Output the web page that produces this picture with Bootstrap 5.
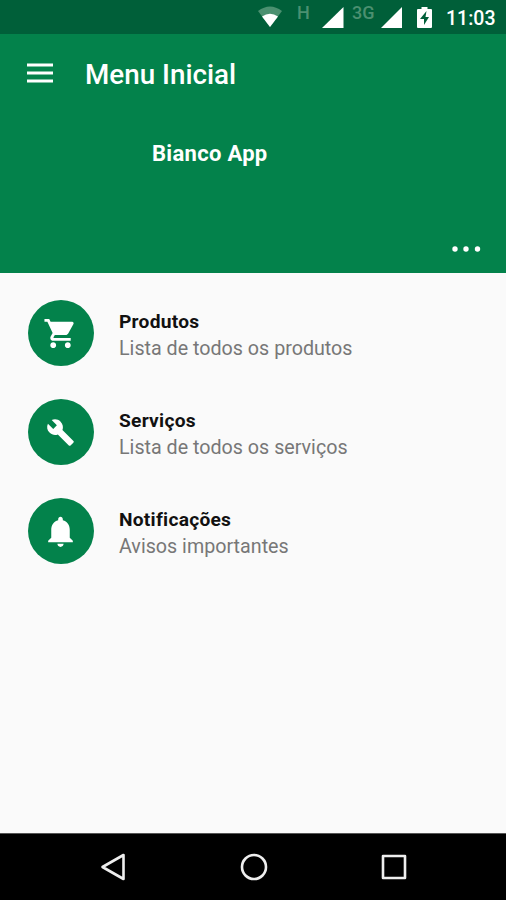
<!DOCTYPE html>
<html lang="pt-BR">
<head>
<meta charset="utf-8">
<meta name="viewport" content="width=device-width, initial-scale=1">
<title>Menu Inicial</title>
<link href="https://cdn.jsdelivr.net/npm/bootstrap@5.3.0/dist/css/bootstrap.min.css" rel="stylesheet">
<style>
body{font-family:Roboto,"Noto Sans",sans-serif;background:#fafafa;height:900px;overflow:hidden}
svg{display:block;flex:none}
.status{height:34px;background:#005f39}
.status .clock{font-size:19.5px;font-weight:500;line-height:34px;width:50px;margin-left:14px;margin-right:10px;white-space:nowrap;padding-top:2px}
.net{font-size:18px;font-weight:500;line-height:26px;color:#4b9070;height:34px}
.net-h{margin-left:14px;width:25px}
.net-3g{margin-left:8px;width:29px}
.battery{margin-left:14px}
.hero{height:239px;background:#03824b}
.hero-bar{padding:23px 27px 0}
.hero-bar svg{margin-bottom:3px}
.app-title{font-size:27.8px;font-weight:500;line-height:34px;padding-left:32px;padding-top:1px}
.app-name{font-size:22px;letter-spacing:.3px;font-weight:700;line-height:28px;padding-left:152px;margin-top:48px}
.more{padding:0 25px 20px}
.menu-list{padding:27px 28px 0;gap:33px}
.disc{width:66px;height:66px;background:#03824b;flex:none}
.disc svg{margin-right:1px}
.entry{gap:25px}
.entry-copy{padding-top:4px}
.entry-title{font-size:19.2px;letter-spacing:.25px;font-weight:700;line-height:27px;color:#111}
.entry-text{font-size:19.7px;font-weight:400;line-height:27px;color:#777}
.softkeys{height:67px;background:#000;border-top:1px solid #555;padding:0 98px 0 99px}
</style>
</head>
<body class="d-flex flex-column">
<div class="status d-flex justify-content-end align-items-start text-white">
  <svg width="26" height="34" viewBox="0 0 26 34"><path d="M1 11Q13 2 25 11L13 27z" fill="#4b9070"/><path d="M5 16.500Q13 11 21 16.500L13 27z" fill="#fff"/></svg>
  <span class="net net-h">H</span>
  <svg width="22" height="34" viewBox="0 0 22 34"><path d="M0 28L21.5 7V28z" fill="#fff"/></svg>
  <span class="net net-3g">3G</span>
  <svg width="22" height="34" viewBox="0 0 22 34"><path d="M0 28L21 7V28z" fill="#fff"/></svg>
  <svg class="battery" width="15" height="34" viewBox="0 0 15 34"><path d="M4.5 7h6v2H14q1 0 1 1v17q0 1-1 1H1q-1 0-1-1V10q0-1 1-1h3.500z" fill="#fff"/><path d="M9.500 11L3 19h4v6l5-8H8.500z" fill="#005f39"/></svg>
  <span class="clock">11:03</span>
</div>
<header class="hero text-white d-flex flex-column">
  <div class="hero-bar d-flex align-items-center">
    <svg width="26" height="20" viewBox="0 0 26 20"><path d="M0 2h26M0 10h26M0 18h26" stroke="#fff" stroke-width="3.2"/></svg>
    <div class="app-title">Menu Inicial</div>
  </div>
  <div class="app-name">Bianco App</div>
  <div class="more mt-auto ms-auto">
    <svg width="30" height="8" viewBox="0 0 30 8" fill="#fff"><circle cx="4" cy="4" r="2.700"/><circle cx="15" cy="4" r="2.700"/><circle cx="26.500" cy="4" r="2.700"/></svg>
  </div>
</header>
<main class="menu-list d-flex flex-column flex-grow-1">
  <div class="entry d-flex align-items-center">
    <div class="disc rounded-circle d-flex align-items-center justify-content-center"><svg width="35" height="35" viewBox="0 0 24 24" fill="#fff"><path d="M7 18c-1.100 0-1.990.9-1.990 2S5.900 22 7 22s2-.9 2-2-.9-2-2-2zM1 2v2h2l3.600 7.590-1.350 2.450c-.16.280-.25.610-.25.960 0 1.100.9 2 2 2h12v-2H7.420c-.14 0-.25-.11-.25-.25l.03-.12.900-1.630h7.450c.75 0 1.410-.41 1.750-1.030l3.580-6.490A1 1 0 0 0 20 4H5.210l-.94-2H1zm16 16c-1.100 0-1.990.9-1.990 2s.89 2 1.990 2 2-.9 2-2-.9-2-2-2z"/></svg></div>
    <div class="entry-copy"><div class="entry-title">Produtos</div><div class="entry-text">Lista de todos os produtos</div></div>
  </div>
  <div class="entry d-flex align-items-center">
    <div class="disc rounded-circle d-flex align-items-center justify-content-center"><svg width="29" height="29" viewBox="0 0 24 24" fill="#fff"><path d="M22.700 19l-9.100-9.100c.9-2.300.4-5-1.500-6.900-2-2-5-2.400-7.400-1.300L9 6 6 9 1.600 4.700C.4 7.100.9 10.100 2.900 12.100c1.900 1.900 4.600 2.400 6.900 1.500l9.100 9.100c.4.4 1 .4 1.400 0l2.300-2.300c.5-.4.5-1.100.1-1.400z"/></svg></div>
    <div class="entry-copy"><div class="entry-title">Serviços</div><div class="entry-text">Lista de todos os serviços</div></div>
  </div>
  <div class="entry d-flex align-items-center">
    <div class="disc rounded-circle d-flex align-items-center justify-content-center"><svg width="37" height="37" viewBox="0 0 24 24" fill="#fff"><path d="M12 22c1.100 0 2-.9 2-2h-4c0 1.100.89 2 2 2zm6-6v-5c0-3.070-1.640-5.640-4.500-6.320V4c0-.83-.67-1.500-1.500-1.500s-1.500.67-1.500 1.500v.68C7.630 5.360 6 7.920 6 11v5l-2 2v1h16v-1l-2-2z"/></svg></div>
    <div class="entry-copy"><div class="entry-title">Notificações</div><div class="entry-text">Avisos importantes</div></div>
  </div>
</main>
<nav class="softkeys d-flex align-items-center justify-content-between">
  <svg width="28" height="30" viewBox="0 0 28 30" fill="none" stroke="#eee" stroke-width="2.600" stroke-linejoin="round"><path d="M3.500 15L24.500 3V27z"/></svg>
  <svg width="28" height="30" viewBox="0 0 28 30" fill="none" stroke="#eee" stroke-width="2.600"><circle cx="14" cy="15" r="12"/></svg>
  <svg width="28" height="30" viewBox="0 0 28 30" fill="none" stroke="#eee" stroke-width="2.600" stroke-linejoin="round"><path d="M3 4h22v22H3z"/></svg>
</nav>
<script src="https://cdn.jsdelivr.net/npm/bootstrap@5.3.0/dist/js/bootstrap.bundle.min.js"></script>
</body>
</html>
